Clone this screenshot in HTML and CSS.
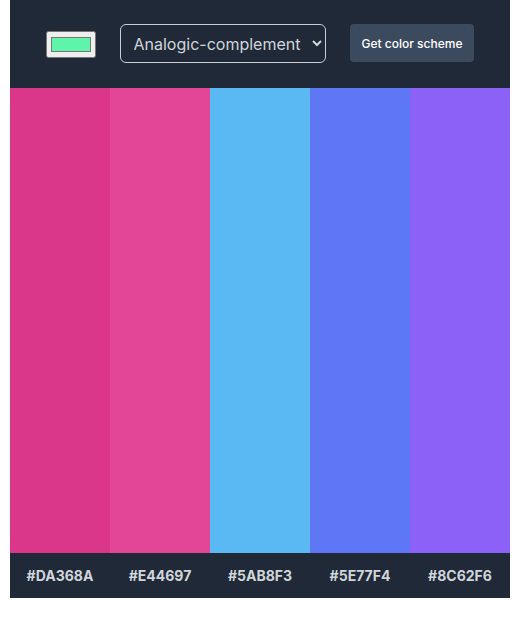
FILE: index.html
```html
<!DOCTYPE html>
<html>
<head>
<meta charset="utf-8">
<link rel="stylesheet" href="styles.css">
</head>
<body>
<main class="app">
  <header class="controls">
    <input class="seed" type="color" value="#5ef5aa">
    <select class="mode">
      <option>Analogic-complement</option>
    </select>
    <button class="get-btn">Get color scheme</button>
  </header>
  <section class="swatches">
    <div class="swatch" style="background:#DA368A"></div>
    <div class="swatch" style="background:#E44697"></div>
    <div class="swatch" style="background:#5AB8F3"></div>
    <div class="swatch" style="background:#5E77F4"></div>
    <div class="swatch" style="background:#8C62F6"></div>
  </section>
  <footer class="codes">
    <span>#DA368A</span>
    <span>#E44697</span>
    <span>#5AB8F3</span>
    <span>#5E77F4</span>
    <span>#8C62F6</span>
  </footer>
</main>
</body>
</html>
```
FILE: styles.css
```css
html, body { margin: 0; padding: 0; background: #fff; }
body { padding: 0 12px 0 10px; font-family: Inter, "Noto Sans", sans-serif; }
.app { width: 500px; }
.controls {
  height: 88px;
  background: #1f2937;
  display: flex;
  align-items: center;
  justify-content: center;
  gap: 24px;
  box-sizing: border-box;
}
.seed {
  width: 50px;
  height: 27px;
  margin: 0;
}
.mode {
  width: 206px;
  height: 39px;
  margin: 0;
  background: #1f2937;
  color: #d1d5db;
  border: 1px solid #c9ced6;
  border-radius: 6px;
  font-family: Inter, sans-serif;
  font-size: 16px;
  padding: 0 8px 0 9px;
  margin-bottom: 1px;
}
.get-btn {
  height: 38px;
  margin: 0;
  padding: 0 12px;
  background: #3c4a5e;
  color: #fff;
  border: none;
  border-radius: 4px;
  font-family: Inter, sans-serif;
  font-size: 12px;
  font-weight: 500;
  margin-bottom: 2px;
}
.swatches {
  display: grid;
  grid-template-columns: repeat(5, 1fr);
  height: 465px;
}
.codes {
  display: grid;
  grid-template-columns: repeat(5, 1fr);
  height: 45px;
  background: #1f2937;
  align-items: center;
  text-align: center;
  color: #d1d5db;
  font-size: 14px;
  font-weight: 700;
}
```
